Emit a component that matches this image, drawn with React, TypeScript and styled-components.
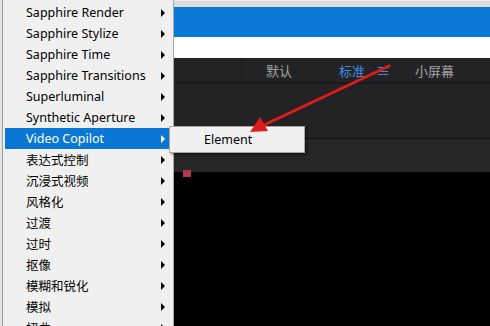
import styled, { createGlobalStyle } from "styled-components";

const GlobalStyle = createGlobalStyle`
  html, body {
    margin: 0;
    padding: 0;
    width: 490px;
    height: 326px;
    overflow: hidden;
    background: #000;
  }
  * {
    box-sizing: border-box;
  }
`;

const menuItems = [
  "Sapphire Render",
  "Sapphire Stylize",
  "Sapphire Time",
  "Sapphire Transitions",
  "Superluminal",
  "Synthetic Aperture",
  "Video Copilot",
  "表达式控制",
  "沉浸式视频",
  "风格化",
  "过渡",
  "过时",
  "抠像",
  "模糊和锐化",
  "模拟",
  "扭曲",
];

export default function App() {
  return (
    <>
      <GlobalStyle />
      <Page>
        <Edge />
        <Menu>
          {menuItems.map((label) => (
            <MenuItem key={label} $active={label === "Video Copilot"}>
              <span>{label}</span>
              <Caret $active={label === "Video Copilot"} />
            </MenuItem>
          ))}
        </Menu>
        <Window>
          <TopStrip />
          <TitleBar />
          <WhiteBar />
          <Toolbar>
            <ToolLeft />
            <Tab $gap={24}>默认</Tab>
            <Tab $gap={47} $active>
              标准
            </Tab>
            <MenuIcon>≡</MenuIcon>
            <Tab $gap={25}>小屏幕</Tab>
          </Toolbar>
          <Panel />
          <SubPanel />
          <Viewer>
            <Marker />
          </Viewer>
        </Window>
        <SubMenu>
          <SubItem>Element</SubItem>
        </SubMenu>
        <Pointer width="490" height="326" viewBox="0 0 490 326">
          <line x1="389" y1="66" x2="262" y2="126" stroke="#e01c1c" strokeWidth="3" strokeLinecap="round" />
          <polygon points="250,132 268,131 260,117" fill="#e01c1c" />
        </Pointer>
      </Page>
    </>
  );
}

const Page = styled.div`
  position: relative;
  display: flex;
  width: 490px;
  height: 326px;
  background: #e8e8e8;
  font-family: "Noto Sans", "Noto Sans CJK SC", sans-serif;
`;

const Edge = styled.div`
  width: 3px;
  background: #e4e4e4;
  border-right: 1px solid #9c9c9c;
`;

const Menu = styled.div`
  width: 171px;
  background: #f0f0f0;
  border-right: 1px solid #a8a8a8;
  padding: 2px 3px 0 2px;
  display: flex;
  flex-direction: column;
`;

const MenuItem = styled.div<{ $active?: boolean }>`
  height: 21px;
  flex: none;
  display: flex;
  align-items: center;
  justify-content: space-between;
  padding: 0 5px 0 21px;
  font-size: 12.5px;
  color: ${(p) => (p.$active ? "#fff" : "#000")};
  background: ${(p) => (p.$active ? "#0a77d5" : "transparent")};
  white-space: nowrap;
`;

const Caret = styled.span<{ $active?: boolean }>`
  width: 0;
  height: 0;
  border-top: 4px solid transparent;
  border-bottom: 4px solid transparent;
  border-left: 4px solid ${(p) => (p.$active ? "#fff" : "#000")};
`;

const Window = styled.div`
  flex: 1;
  display: flex;
  flex-direction: column;
  background: #000;
`;

const TopStrip = styled.div`
  height: 7px;
  background: #dcdcdc;
  border-top: 1px solid #ececec;
`;

const TitleBar = styled.div`
  height: 30px;
  background: #0b78d6;
`;

const WhiteBar = styled.div`
  height: 21px;
  background: #fff;
`;

const Toolbar = styled.div`
  height: 26px;
  display: flex;
  align-items: center;
  background: #232325;
  border-bottom: 2px solid #1a1a1b;
`;

const ToolLeft = styled.div`
  width: 68px;
  height: 100%;
  border-right: 1px solid #19191a;
`;

const Tab = styled.span<{ $gap: number; $active?: boolean }>`
  margin-left: ${(p) => p.$gap}px;
  font-size: 13px;
  color: ${(p) => (p.$active ? "#3b8fe0" : "#a2a2a2")};
`;

const MenuIcon = styled.span`
  margin-left: 11px;
  font-size: 14px;
  color: #3b8fe0;
`;

const Panel = styled.div`
  height: 55px;
  background: #232326;
  border-bottom: 1px solid #0e0e0e;
`;

const SubPanel = styled.div`
  height: 33px;
  background: #262628;
`;

const Viewer = styled.div`
  flex: 1;
  position: relative;
  background: #000;
`;

const Marker = styled.div`
  position: absolute;
  left: 9px;
  top: -2px;
  width: 8px;
  height: 7px;
  background: #b2374a;
`;

const SubMenu = styled.div`
  position: absolute;
  left: 169px;
  top: 126px;
  width: 136px;
  height: 27px;
  background: #f0f0f0;
  border: 1px solid #a8a8a8;
  box-shadow: 2px 2px 2px rgba(0, 0, 0, 0.35);
  display: flex;
  align-items: center;
`;

const SubItem = styled.span`
  padding-left: 34px;
  font-size: 12.5px;
  color: #000;
`;

const Pointer = styled.svg`
  position: absolute;
  left: 0;
  top: 0;
  pointer-events: none;
`;
